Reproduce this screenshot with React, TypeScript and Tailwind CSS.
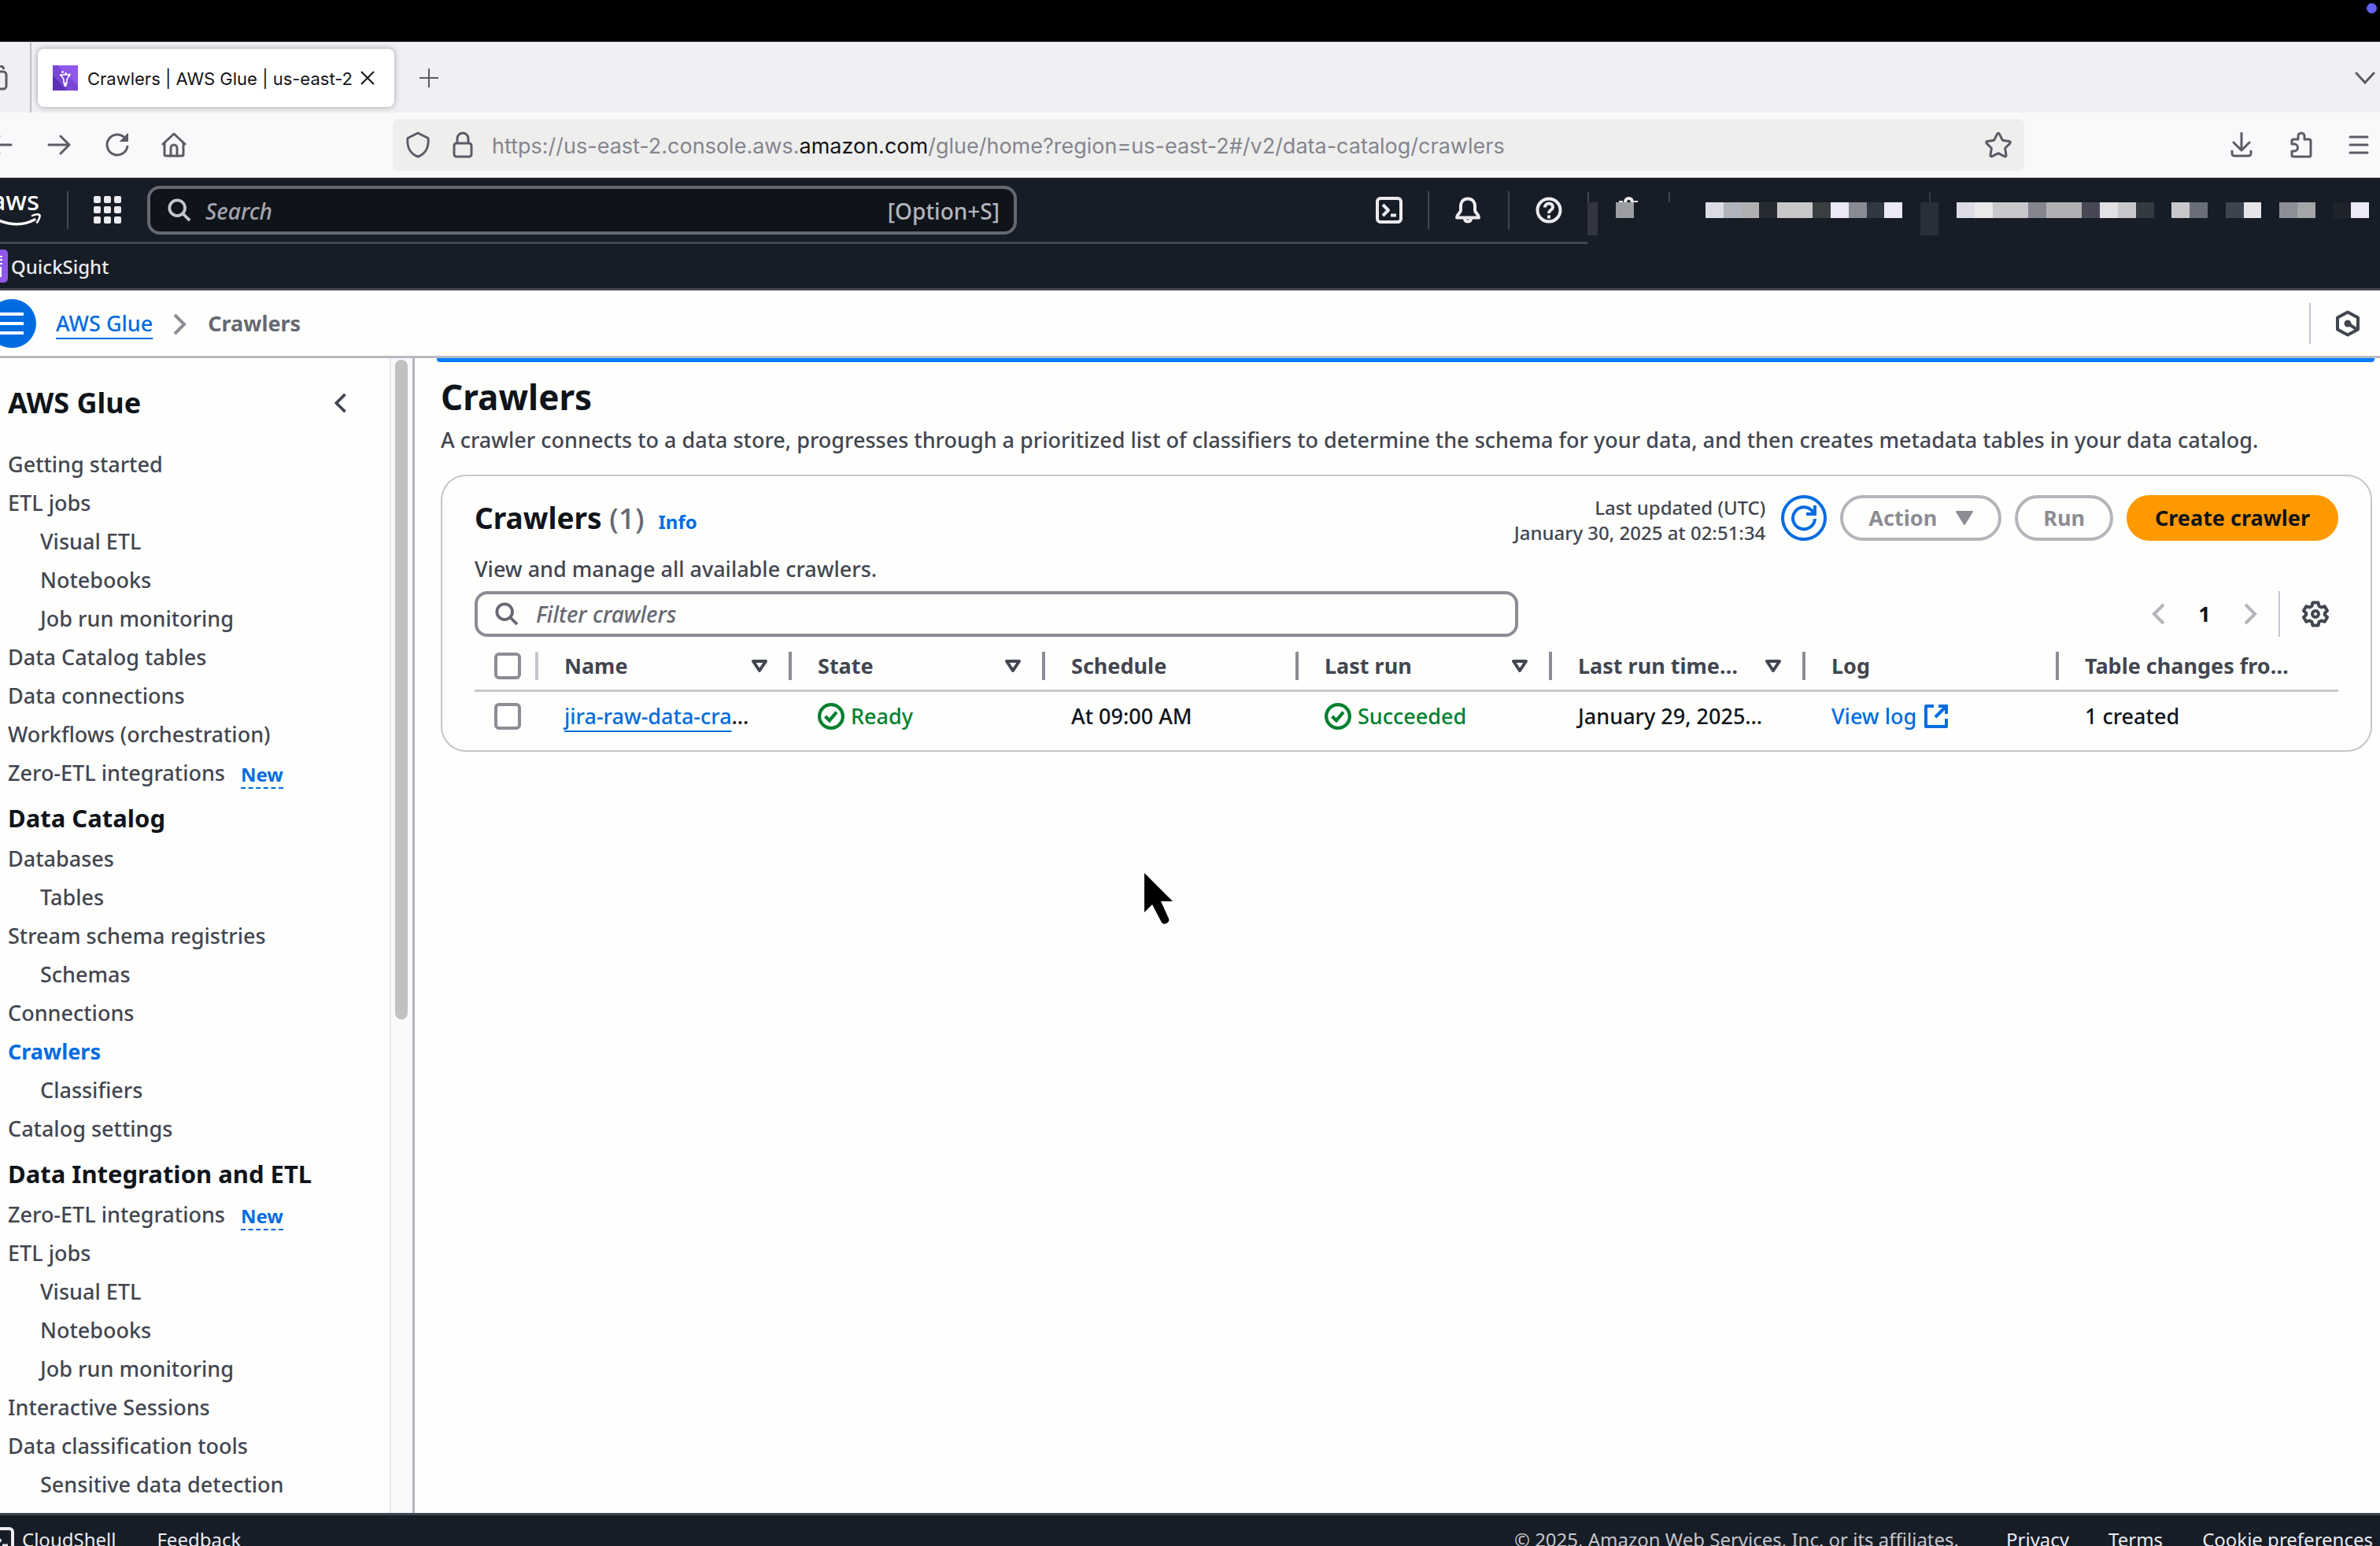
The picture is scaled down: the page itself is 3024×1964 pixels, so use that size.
import React from "react";

type IconProps = { className?: string };

const AMBER = "font-['Noto_Sans','Open_Sans',sans-serif] font-medium";

/* ---------- icons ---------- */

const SearchIcon = ({ className }: IconProps) => (
  <svg viewBox="0 0 32 32" className={className} fill="none" stroke="currentColor" strokeWidth="4" aria-hidden="true">
    <circle cx="13" cy="13" r="10.500" />
    <path d="M20.5 20.5 30 30" />
  </svg>
);

const CloudShellIcon = ({ className }: IconProps) => (
  <svg viewBox="0 0 34 34" className={className} fill="none" stroke="currentColor" strokeWidth="4" strokeLinejoin="round" aria-hidden="true">
    <rect x="2" y="2" width="30" height="30" rx="4" />
    <path d="m9 10 7 7-7 7" />
    <path d="M19 23.500h7" />
  </svg>
);

const BellIcon = ({ className }: IconProps) => (
  <svg viewBox="0 0 34 34" className={className} fill="none" stroke="currentColor" strokeWidth="4" strokeLinejoin="round" aria-hidden="true">
    <path d="M17 2.500c-5.500 0-9 4-9 9.500v5c0 3.500-5 5-5 9.500h28c0-4.500-5-6-5-9.500v-5c0-5.500-3.500-9.500-9-9.500Z" />
    <path d="M13 27c0 3 1.500 4.500 4 4.500s4-1.500 4-4.500" />
  </svg>
);

const HelpIcon = ({ className }: IconProps) => (
  <svg viewBox="0 0 34 34" className={className} fill="none" stroke="currentColor" strokeWidth="4" aria-hidden="true">
    <circle cx="17" cy="17" r="14.500" />
    <path d="M12 13.500c0-3 2-5 5-5s5 2 5 4.500c0 4-5 3.500-5 8" />
    <path d="M17 23.500v4" />
  </svg>
);

const CheckCircle = ({ className }: IconProps) => (
  <svg viewBox="0 0 32 32" className={className} fill="none" stroke="currentColor" strokeWidth="4" aria-hidden="true">
    <circle cx="16" cy="16" r="14" />
    <path d="m9 16 5 5 8.500-10" />
  </svg>
);

const ExternalIcon = ({ className }: IconProps) => (
  <svg viewBox="0 0 30 30" className={className} fill="none" stroke="currentColor" strokeWidth="4" aria-hidden="true">
    <path d="M12 2H2v26h26V18" strokeLinejoin="round" />
    <path d="M18 2h10v10" />
    <path d="M28 2 14 16" />
  </svg>
);

const ChevronIcon = ({ className, dir }: IconProps & { dir: "left" | "right" }) => (
  <svg viewBox="0 0 18 28" className={className} fill="none" stroke="currentColor" strokeWidth="4" aria-hidden="true">
    <path d={dir === "left" ? "M16 2 4 14l12 12" : "M2 2l12 12L2 26"} />
  </svg>
);

const SortIcon = () => (
  <svg viewBox="0 0 22 18" className="h-[18px] w-[22px] shrink-0" fill="none" stroke="currentColor" strokeWidth="4" strokeLinejoin="round" aria-hidden="true">
    <path d="M3 3h16l-8 12Z" />
  </svg>
);

const GearIcon = ({ className }: IconProps) => (
  <svg viewBox="0 0 34 34" className={className} fill="none" stroke="currentColor" strokeWidth="4" strokeLinejoin="round" aria-hidden="true">
    <path d="M13.500 2.500h7l1 4.500 2.800 1.600 4.400-1.400 3.300 5.600-3.200 3.200v2l3.200 3.200-3.300 5.600-4.400-1.400-2.800 1.600-1 4.500h-7l-1-4.500-2.800-1.600-4.400 1.400L2 21.200 5.200 18v-2L2 12.800l3.300-5.600 4.400 1.400L12.500 7Z" />
    <circle cx="17" cy="17" r="4" />
  </svg>
);

const GlueLogo = () => (
  <svg viewBox="0 0 32 32" className="size-8 shrink-0" aria-hidden="true">
    <rect width="32" height="32" fill="#8f57ea" />
    <path d="M6 0 32 26v6H0V0Z" fill="#7a46d6" />
    <path d="M0 13 18 32H0Z" fill="#5a30b5" />
    <path d="M10.500 12h11L18 18v4.500h-4V18Z" fill="none" stroke="#fff" strokeWidth="1.600" />
    <circle cx="12.500" cy="8.500" r="1.500" fill="#fff" />
    <circle cx="16.500" cy="10.500" r="1.500" fill="#fff" />
    <circle cx="21" cy="12" r="1.500" fill="#fff" />
    <circle cx="10.500" cy="12.500" r="1.500" fill="#fff" />
    <circle cx="16" cy="25" r="2" fill="#fff" />
  </svg>
);

/* ---------- browser chrome ---------- */

const TabStrip = () => (
  <div className="flex h-[90px] items-center overflow-hidden border-t border-[#d8d8de] bg-[#f0f0f4] font-[Inter,sans-serif] text-[#15141a]">
    <button aria-label="Recent tabs" className="-ml-6 flex h-full w-16 items-center justify-end border-r-2 border-[#bdbdc6] pr-7 text-[#5b5b66]">
      <svg viewBox="0 0 32 32" className="size-8 shrink-0" fill="none" stroke="currentColor" strokeWidth="3">
        <path d="M4 5a4 4 0 0 1 4-4h14a5 5 0 0 1 5 4" />
        <rect x="2" y="8" width="28" height="22" rx="4" />
      </svg>
    </button>
    <div className="ml-2 flex h-[74px] w-[453px] items-center rounded-lg bg-white pl-[19px] shadow-[0_0_7px_rgba(0,0,0,0.35)]">
      <GlueLogo />
      <span className="ml-3 pt-[3px] text-[22px] whitespace-nowrap">Crawlers | AWS Glue | us-east-2</span>
      <button aria-label="Close tab" className="ml-[10px]">
        <svg viewBox="0 0 18 18" className="size-[18px]" fill="none" stroke="currentColor" strokeWidth="2">
          <path d="m1 1 16 16M17 1 1 17" />
        </svg>
      </button>
    </div>
    <button aria-label="New tab" className="ml-8 text-[#5b5b66]">
      <svg viewBox="0 0 24 24" className="size-6" fill="none" stroke="currentColor" strokeWidth="2">
        <path d="M12 0v24M0 12h24" />
      </svg>
    </button>
    <button aria-label="List all tabs" className="mr-[6px] ml-auto text-[#5b5b66]">
      <svg viewBox="0 0 26 16" className="h-4 w-[26px]" fill="none" stroke="currentColor" strokeWidth="3" strokeLinecap="round">
        <path d="m2 2 11 12L24 2" />
      </svg>
    </button>
  </div>
);

const Toolbar = () => (
  <div className="flex h-[83px] items-center overflow-hidden border-b border-[#c9c9cf] bg-[#f9f9fb] font-[Inter,sans-serif] text-[#5b5b66]">
    <button aria-label="Back" className="-ml-[14px]">
      <svg viewBox="0 0 30 26" className="h-[26px] w-[30px]" fill="none" stroke="currentColor" strokeWidth="3" strokeLinecap="round" strokeLinejoin="round">
        <path d="M28 13H2M13 2 2 13l11 11" />
      </svg>
    </button>
    <button aria-label="Forward" className="ml-11">
      <svg viewBox="0 0 30 26" className="h-[26px] w-[30px]" fill="none" stroke="currentColor" strokeWidth="3" strokeLinecap="round" strokeLinejoin="round">
        <path d="M2 13h26M17 2l11 11-11 11" />
      </svg>
    </button>
    <button aria-label="Reload" className="ml-[43px]">
      <svg viewBox="0 0 32 32" className="size-8" fill="none" stroke="currentColor" strokeWidth="3">
        <path d="M29 17A13 13 0 1 1 25.500 7" />
        <path d="M29.500 1.500v10h-10Z" fill="currentColor" strokeWidth="1" />
      </svg>
    </button>
    <button aria-label="Home" className="ml-10">
      <svg viewBox="0 0 32 32" className="size-8" fill="none" stroke="currentColor" strokeWidth="3" strokeLinecap="round" strokeLinejoin="round">
        <path d="M2 15 16 2l14 13" />
        <path d="M4 14v14a2 2 0 0 0 2 2h20a2 2 0 0 0 2-2V14" />
        <path d="M12 30V20a4 4 0 0 1 8 0v10" />
      </svg>
    </button>
    <div className="ml-[262px] flex h-[66px] flex-1 items-center rounded-lg bg-[#eeeeed] pr-4 pl-4">
      <svg viewBox="0 0 32 34" className="h-[34px] w-8 shrink-0" fill="none" stroke="currentColor" strokeWidth="3" strokeLinejoin="round" aria-hidden="true">
        <path d="M16 2 3 8.500C2 18 5 28 16 32c11-4 14-14 13-23.500Z" />
      </svg>
      <svg viewBox="0 0 26 34" className="ml-7 h-[34px] w-[26px] shrink-0" fill="none" stroke="currentColor" strokeWidth="3" aria-hidden="true">
        <rect x="2" y="15" width="22" height="17" rx="3" />
        <path d="M6 15V9a7 7 0 0 1 14 0v6" />
      </svg>
      <p className="ml-6 flex-1 pt-1 text-[27px] whitespace-nowrap text-[#85858f]">
        https://us-east-2.console.aws.<span className="text-[#15141a]">amazon.com</span>/glue/home?region=us-east-2#/v2/data-catalog/crawlers
      </p>
      <button aria-label="Bookmark this page">
        <svg viewBox="0 0 34 34" className="size-[34px]" fill="none" stroke="currentColor" strokeWidth="3" strokeLinejoin="round">
          <path d="M15.600 3.200a1.600 1.600 0 0 1 2.800 0l4 8 8.600 1.300a1.500 1.500 0 0 1 .8 2.600l-6.200 6.200 1.400 8.800a1.500 1.500 0 0 1-2.200 1.600L17 27.700l-7.800 4a1.500 1.500 0 0 1-2.200-1.600l1.400-8.800-6.200-6.200a1.500 1.500 0 0 1 .8-2.600l8.600-1.300Z" />
        </svg>
      </button>
    </div>
    <button aria-label="Downloads" className="ml-[262px]">
      <svg viewBox="0 0 28 32" className="h-8 w-7" fill="none" stroke="currentColor" strokeWidth="3" strokeLinecap="round" strokeLinejoin="round">
        <path d="M14 1v21M4 13l10 10 10-10" />
        <path d="M2 24v3a3 3 0 0 0 3 3h18a3 3 0 0 0 3-3v-3" />
      </svg>
    </button>
    <button aria-label="Extensions" className="ml-12">
      <svg viewBox="0 0 28 34" className="h-[34px] w-7" fill="none" stroke="currentColor" strokeWidth="3" strokeLinejoin="round">
        <path d="M2 16v-4a2 2 0 0 1 2-2h6V6a4 4 0 0 1 8 0v4h6a2 2 0 0 1 2 2v18a2 2 0 0 1-2 2H4a2 2 0 0 1-2-2v-5h3a4.500 4.500 0 0 0 0-9Z" />
      </svg>
    </button>
    <button aria-label="Open application menu" className="mr-[14px] ml-[46px]">
      <svg viewBox="0 0 26 24" className="h-6 w-[26px]" fill="none" stroke="currentColor" strokeWidth="3" strokeLinecap="round">
        <path d="M2 2h22M2 12h22M2 22h22" />
      </svg>
    </button>
  </div>
);

/* ---------- AWS navigation ---------- */

const cellsA = ["#dcdce6", "#b0b4bc", "#b0b0b3", "#262a33", "#c8c8ca", "#c8c8ca", "#3a3f42", "#ebe9f6", "#888b94", "#323842", "#ebe9f6"];
const cellsB = [
  "#dcdce6", "#e9e9eb", "#c8c8cc", "#c8c8cc", "#85858f", "#b0b0b4", "#b0b0b4", "#474853", "#e2dfe5", "#c8c8cc", "#333b41", "transparent",
  "#c8c8cc", "#6a6e78", "transparent", "#3d444d", "#e5e5ea", "transparent", "#8b8f98", "#a3a5a9", "transparent", "#1f242c", "#ebe9f6",
];

const Mosaic = ({ cells, className }: { cells: string[]; className: string }) => (
  <div className={`mt-[31px] flex h-5 ${className}`}>
    {cells.map((c, i) => (
      <span key={i} className="flex-1" style={{ backgroundColor: c }} />
    ))}
  </div>
);

const NavDivider = ({ className }: IconProps) => <span className={`h-12 w-[2px] shrink-0 bg-[#424650] ${className ?? ""}`} />;

const AwsHeader = () => (
  <header className={`bg-[#161d26] text-[#ebebf0] ${AMBER}`}>
    <div className="flex h-[84px]">
      <div className="flex min-w-0 flex-1 items-center overflow-hidden border-b-[3px] border-[#424650]">
        <a href="#aws" aria-label="AWS home" className="-ml-[18px] flex shrink-0 flex-col items-end pb-1">
          <span className="pr-[2px] text-[33px] leading-6 text-white">aws</span>
          <svg viewBox="0 0 70 16" className="mt-1 h-4 w-[70px]" fill="none" stroke="#fff" strokeLinecap="round" aria-hidden="true">
            <path d="M2 2q34 20 60 6" strokeWidth="3.500" />
            <path d="M59 3c5-2.500 9-2 9.500-.5s-1 6-3.500 9" strokeWidth="2.500" />
          </svg>
        </a>
        <NavDivider className="ml-[33px]" />
        <button aria-label="Services" className="ml-8 grid shrink-0 grid-cols-3 gap-1">
          {Array.from({ length: 9 }, (_, i) => (
            <span key={i} className="size-[9px] rounded-[2px] bg-[#ebebf0]" />
          ))}
        </button>
        <label className="ml-[33px] flex h-[62px] w-[1105px] items-center rounded-2xl border-4 border-[#656871] bg-[#0f141a] px-[18px] text-[#b4b4bb]">
          <SearchIcon className="ml-[4px] size-[30px] shrink-0 text-[#c6c6cd]" />
          <input aria-label="Search" placeholder="Search" className="ml-[18px] min-w-0 flex-1 bg-transparent pt-[2px] text-[28px] outline-none placeholder:text-[#a4a4ad] placeholder:italic" />
          <span className="pt-[2px] text-[28px]">[Option+S]</span>
        </label>
        <button aria-label="CloudShell" className="ml-auto">
          <CloudShellIcon className="size-[34px]" />
        </button>
        <NavDivider className="ml-8" />
        <button aria-label="Notifications" className="ml-8">
          <BellIcon className="size-[34px]" />
        </button>
        <NavDivider className="ml-[34px]" />
        <button aria-label="Support" className="mr-8 ml-[33px]">
          <HelpIcon className="size-[34px]" />
        </button>
      </div>
      <div className="flex shrink-0 items-start pr-[14px]" aria-hidden="true">
        <div className="flex flex-col">
          <span className="mt-[18px] h-[13px] w-[2px] bg-[#424650]" />
          <span className="h-[42px] w-[13px] bg-[#33353f]" />
        </div>
        <div className="ml-[23px] flex flex-col">
          <svg viewBox="0 0 30 7" className="mt-6 h-[7px] w-[30px]" fill="none" stroke="#ebebf0" strokeWidth="4">
            <path d="M4 7h5M23 7h5M12 8c0-4 1-6 4.500-6S21 4 21 8" />
          </svg>
          <span className="h-5 w-[23px] bg-[#9c9da2]" />
        </div>
        <span className="mt-[18px] ml-[37px] h-[13px] w-[2px] bg-[#424650]" />
        <Mosaic cells={cellsA} className="ml-[45px] w-[250px]" />
        <div className="ml-[23px] flex flex-col items-center">
          <span className="mt-[18px] h-[13px] w-[2px] bg-[#33353f]" />
          <span className="h-[42px] w-[23px] bg-[#292f3b]" />
        </div>
        <Mosaic cells={cellsB} className="ml-[23px] w-[524px]" />
      </div>
    </div>
    <div className="flex h-[59px] items-center overflow-hidden border-b-[3px] border-[#424650]">
      <a href="#quicksight" className="-ml-8 flex items-center">
        <svg viewBox="0 0 42 42" className="size-[42px]" aria-hidden="true">
          <rect width="42" height="42" rx="5" fill="#8f57ea" />
          <path d="M0 10 30 42H5a5 5 0 0 1-5-5Z" fill="#6f3ccf" />
          <path d="M33 22v12H8M28 34V24M35 18h-6M35 13h-5v-4h5" fill="none" stroke="#fff" strokeWidth="2" />
        </svg>
        <span className="ml-1 pt-[2px] text-[24px] text-[#ebebf0]">QuickSight</span>
      </a>
    </div>
  </header>
);

const BreadcrumbBar = () => (
  <div className={`flex h-[86px] items-center overflow-hidden border-b-[3px] border-[#b9b9c3] ${AMBER}`}>
    <button aria-label="Open navigation" className="-ml-4 flex size-[62px] shrink-0 items-center justify-center rounded-full bg-[#006ce0]">
      <svg viewBox="0 0 30 28" className="h-7 w-[30px]" stroke="#fff" strokeWidth="4" aria-hidden="true">
        <path d="M0 2h30M0 14h30M0 26h30" />
      </svg>
    </button>
    <nav aria-label="Breadcrumb" className="ml-[25px] flex items-center pt-[2px] text-[27px]">
      <a href="#glue" className="text-[#006ce0] underline decoration-2 underline-offset-8">AWS Glue</a>
      <ChevronIcon dir="right" className="mx-[26px] h-7 w-[18px] text-[#8c8c94]" />
      <span className="font-bold text-[#656871]">Crawlers</span>
    </nav>
    <span className="ml-auto h-[52px] w-[2px] bg-[#c6c6cd]" />
    <button aria-label="Amazon Q" className="mr-[25px] ml-[31px] text-[#424650]">
      <svg viewBox="0 0 32 34" className="h-[34px] w-8" fill="none" stroke="currentColor" strokeWidth="4" strokeLinejoin="round">
        <path d="M16 2.500 29 9.500v15L16 31.500 3 24.500v-15Z" />
        <circle cx="16" cy="17" r="4.500" fill="currentColor" stroke="none" />
        <path d="m16 17 11 7" />
      </svg>
    </button>
  </div>
);

/* ---------- side navigation ---------- */

type NavItem = { label: string; kind?: "sub" | "heading" | "active"; isNew?: boolean };

const navItems: NavItem[] = [
  { label: "Getting started" },
  { label: "ETL jobs" },
  { label: "Visual ETL", kind: "sub" },
  { label: "Notebooks", kind: "sub" },
  { label: "Job run monitoring", kind: "sub" },
  { label: "Data Catalog tables" },
  { label: "Data connections" },
  { label: "Workflows (orchestration)" },
  { label: "Zero-ETL integrations", isNew: true },
  { label: "Data Catalog", kind: "heading" },
  { label: "Databases" },
  { label: "Tables", kind: "sub" },
  { label: "Stream schema registries" },
  { label: "Schemas", kind: "sub" },
  { label: "Connections" },
  { label: "Crawlers", kind: "active" },
  { label: "Classifiers", kind: "sub" },
  { label: "Catalog settings" },
  { label: "Data Integration and ETL", kind: "heading" },
  { label: "Zero-ETL integrations", isNew: true },
  { label: "ETL jobs" },
  { label: "Visual ETL", kind: "sub" },
  { label: "Notebooks", kind: "sub" },
  { label: "Job run monitoring", kind: "sub" },
  { label: "Interactive Sessions" },
  { label: "Data classification tools" },
  { label: "Sensitive data detection", kind: "sub" },
];

const linkClass = {
  plain: "text-[#424650]",
  sub: "ml-[41px] text-[#424650]",
  active: "font-bold text-[#006ce0]",
};

const SideNav = () => (
  <aside className="flex w-[527px] shrink-0 overflow-hidden border-r-[3px] border-[#b4b4bb]">
    <div className="min-w-0 flex-1">
      <div className="flex h-[111px] items-center justify-between pt-[2px] pr-[54px] pl-[10px]">
        <h2 className="text-[36px] font-bold text-[#0f141a]">AWS Glue</h2>
        <button aria-label="Close navigation" className="text-[#424650]">
          <ChevronIcon dir="left" className="h-[26px] w-[18px]" />
        </button>
      </div>
      <ul className="text-[27px] whitespace-nowrap">
        {navItems.map((item, i) =>
          item.kind === "heading" ? (
            <li key={i} className="flex h-[60px] items-center pt-1 pl-[10px]">
              <h3 className="text-[31px] font-bold text-[#0f141a]">{item.label}</h3>
            </li>
          ) : (
            <li key={i} className="flex h-[49px] items-center pl-[10px]">
              <a href="#nav" className={linkClass[item.kind ?? "plain"]}>{item.label}</a>
              {item.isNew && (
                <a href="#new" className="mt-1 ml-5 border-b-2 border-dashed border-[#006ce0] text-[24px] leading-8 font-bold text-[#006ce0]">New</a>
              )}
            </li>
          ),
        )}
      </ul>
    </div>
    <div className="w-[29px] shrink-0 border-l-2 border-[#e8e8ec] bg-[#f9f9fb] pt-[2px] pl-[5px]">
      <div className="h-[838px] w-4 rounded-full bg-[#c1c1c1]" />
    </div>
  </aside>
);

/* ---------- crawler table ---------- */

const columns = [
  { label: "Name", sort: true },
  { label: "State", sort: true },
  { label: "Schedule" },
  { label: "Last run", sort: true },
  { label: "Last run timestamp", sort: true },
  { label: "Log" },
  { label: "Table changes from last run" },
];

const Tick = ({ label }: { label: string }) => (
  <input type="checkbox" aria-label={label} className="ml-[25px] block size-[34px] appearance-none rounded-md border-4 border-[#8c8c94] bg-white" />
);

const cell = "truncate pr-10 pl-[33px]";

const CrawlerTable = () => (
  <table className="w-full table-fixed border-collapse text-left text-[27px]">
    <colgroup>
      <col className="w-[81px]" />
      <col className="w-[322px]" />
      <col className="w-[322px]" />
      <col className="w-[322px]" />
      <col className="w-[322px]" />
      <col className="w-[322px]" />
      <col className="w-[322px]" />
      <col />
    </colgroup>
    <thead>
      <tr className="h-[68px] border-b-[3px] border-[#c6c6cd] text-[#424650]">
        <th scope="col" className="p-0 pt-2">
          <div className="flex items-center justify-between">
            <Tick label="Select all crawlers" />
            <span className="h-9 w-1 bg-[#c6c6cd]" />
          </div>
        </th>
        {columns.map((c, i) => (
          <th key={c.label} scope="col" className="p-0 pt-2 font-bold">
            <div className="flex items-center pl-[33px]">
              <span className={i === columns.length - 1 ? "flex-1 truncate pr-10" : "flex-1 truncate"}>{c.label}</span>
              {c.sort && (
                <button aria-label={`Sort by ${c.label}`} className="mr-[26px] ml-6">
                  <SortIcon />
                </button>
              )}
              {i < columns.length - 1 && <span className="h-9 w-1 shrink-0 bg-[#8c8c94]" />}
            </div>
          </th>
        ))}
      </tr>
    </thead>
    <tbody>
      <tr className="h-16 text-[#0f141a]">
        <td className="p-0">
          <Tick label="Select jira-raw-data-crawler" />
        </td>
        <td className={cell}>
          <a href="#crawler" className="text-[#006ce0] underline decoration-2 underline-offset-8">jira-raw-data-crawler</a>
        </td>
        <td className="pl-[33px]">
          <span className="flex items-center gap-2 text-[#00802f]">
            <CheckCircle className="size-[34px]" />
            Ready
          </span>
        </td>
        <td className={cell}>At 09:00 AM</td>
        <td className="pl-[33px]">
          <span className="flex items-center gap-2 text-[#00802f]">
            <CheckCircle className="size-[34px]" />
            Succeeded
          </span>
        </td>
        <td className="truncate pr-[54px] pl-[33px]">January 29, 2025 at 14:00:34</td>
        <td className="pl-[33px]">
          <a href="#log" className="flex items-center gap-[10px] text-[#006ce0]">
            View log
            <ExternalIcon className="size-[30px]" />
          </a>
        </td>
        <td className={cell}>1 created</td>
      </tr>
    </tbody>
  </table>
);

const pill = "flex h-[58px] items-center rounded-full border-4 text-[27px] font-bold";

const CrawlerCard = () => (
  <section className="mt-5 mr-[10px] ml-[33px] rounded-[32px] border-2 border-[#c6c6cd] px-[41px] pt-6 pb-3">
    <div className="flex h-[58px] items-center">
      <h2 className="text-[37px] font-bold text-[#0f141a]">
        Crawlers <span className="font-medium text-[#656871]">(1)</span>
      </h2>
      <a href="#info" className="mt-[10px] ml-[18px] text-[24px] font-bold text-[#006ce0]">Info</a>
      <p className="mr-5 ml-auto pt-[6px] text-right text-[24px] leading-8 text-[#424650]">
        Last updated (UTC)
        <br />
        January 30, 2025 at 02:51:34
      </p>
      <div className="flex gap-[17px]">
        <button aria-label="Refresh" className={`${pill} w-[58px] justify-center border-[#006ce0] text-[#006ce0]`}>
          <svg viewBox="0 0 34 34" className="size-[34px]" fill="none" stroke="currentColor" strokeWidth="4">
            <path d="M31 18A14 14 0 1 1 28 8.500l1.500 2" />
            <path d="M31 1v11H20" />
          </svg>
        </button>
        <button className={`${pill} gap-6 border-[#b4b4bb] px-8 text-[#8c8c94]`}>
          Action
          <svg viewBox="0 0 22 18" className="h-[18px] w-[22px]" fill="currentColor" stroke="currentColor" strokeWidth="2" strokeLinejoin="round" aria-hidden="true">
            <path d="M1 1h20l-10 16Z" />
          </svg>
        </button>
        <button className={`${pill} border-[#b4b4bb] px-8 text-[#8c8c94]`}>Run</button>
        <button className={`${pill} border-[#ff9900] bg-[#ff9900] px-8 text-[#0f141a]`}>Create crawler</button>
      </div>
    </div>
    <p className="mt-4 text-[27px] leading-10 text-[#424650]">View and manage all available crawlers.</p>
    <div className="mt-2 flex items-center">
      <label className="flex h-[58px] w-[56%] items-center rounded-2xl border-4 border-[#8c8c94] px-[22px]">
        <SearchIcon className="size-[30px] shrink-0 text-[#656871]" />
        <input aria-label="Filter crawlers" placeholder="Filter crawlers" className="ml-[22px] min-w-0 flex-1 bg-transparent text-[28px] outline-none placeholder:text-[#656871] placeholder:italic" />
      </label>
      <button aria-label="Previous page" className="ml-auto text-[#b4b4bb]">
        <ChevronIcon dir="left" className="h-7 w-[18px]" />
      </button>
      <button aria-current="page" className="mx-10 w-5 text-center text-[27px] font-bold text-[#0f141a]">1</button>
      <button aria-label="Next page" className="text-[#b4b4bb]">
        <ChevronIcon dir="right" className="h-7 w-[18px]" />
      </button>
      <span className="ml-[26px] h-[58px] w-[2px] bg-[#c6c6cd]" />
      <button aria-label="Preferences" className="mr-3 ml-7 text-[#424650]">
        <GearIcon className="size-[34px]" />
      </button>
    </div>
    <CrawlerTable />
  </section>
);

const Footer = () => (
  <footer className="flex h-[42px] shrink-0 items-start overflow-hidden border-t-[3px] border-[#424650] bg-[#161d26] font-['Noto_Sans','Open_Sans',sans-serif] text-[24px] leading-8 whitespace-nowrap text-[#ebebf0]">
    <div className="mt-[15px] flex w-full">
      <CloudShellIcon className="-ml-4 size-[34px]" />
      <a href="#cloudshell" className="ml-[10px]">CloudShell</a>
      <a href="#feedback" className="ml-[52px]">Feedback</a>
      <span className="ml-auto text-[#c6c6cd]">© 2025, Amazon Web Services, Inc. or its affiliates.</span>
      <a href="#privacy" className="ml-[60px]">Privacy</a>
      <a href="#terms" className="ml-[50px]">Terms</a>
      <a href="#cookies" className="mr-[9px] ml-[50px]">Cookie preferences</a>
    </div>
  </footer>
);

export default function App() {
  return (
    <div className="relative flex h-screen flex-col overflow-hidden bg-[#fefefd]">
      <div className="flex h-[53px] shrink-0 justify-end bg-black pt-1 pr-1">
        <span className="size-[13px] rounded-full bg-[#6562f5]" />
      </div>
      <div className="shrink-0">
        <TabStrip />
        <Toolbar />
        <AwsHeader />
        <BreadcrumbBar />
      </div>
      <div className={`flex min-h-0 flex-1 ${AMBER}`}>
        <SideNav />
        <main className="min-w-0 flex-1">
          <div className="mr-[7px] ml-7 h-[5px] rounded-b bg-[#007bff]" />
          <h1 className="mt-[18px] ml-[33px] text-[44px] leading-[52px] font-bold text-[#0f141a]">Crawlers</h1>
          <p className="mt-[5px] ml-[33px] text-[27px] leading-[48px] text-[#424650]">
            A crawler connects to a data store, progresses through a prioritized list of classifiers to determine the schema for your data, and then creates metadata tables in your data catalog.
          </p>
          <CrawlerCard />
        </main>
      </div>
      <Footer />
      <svg viewBox="0 0 38 68" className="absolute top-[1108px] left-[1453px] h-[68px] w-[38px]" aria-hidden="true">
        <path d="M1 1v50l10-10 12 23c3 4 11 0 9-5L22 37h15Z" fill="#000" />
      </svg>
    </div>
  );
}
